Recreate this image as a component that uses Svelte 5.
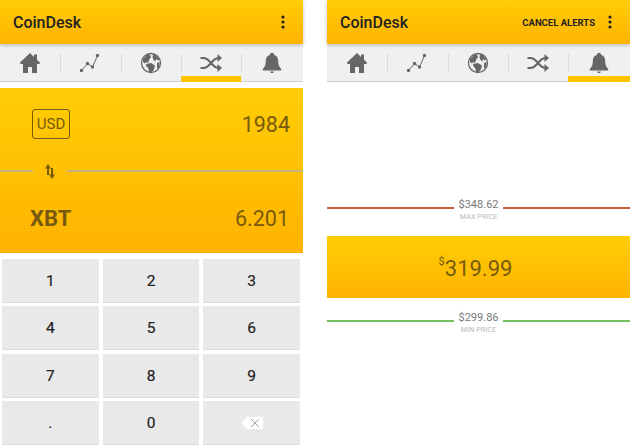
<script lang="ts">
  const tabs = ['home', 'chart', 'globe', 'shuffle', 'bell'];
  const keys = ['1', '2', '3', '4', '5', '6', '7', '8', '9', '.', '0', 'back'];
</script>

{#snippet header(action = '')}
  <header class="appbar">
    <span class="brand">CoinDesk</span>
    {#if action}<span class="action">{action}</span>{/if}
    <svg class="dots" width="4" height="14" viewBox="0 0 4 14" fill="#222">
      <circle cx="2" cy="2" r="1.6" /><circle cx="2" cy="7" r="1.6" /><circle cx="2" cy="12" r="1.6" />
    </svg>
  </header>
{/snippet}

{#snippet tabIcon(name)}
  {#if name === 'home'}
    <svg width="22" height="22" viewBox="0 0 22 22" fill="#666">
      <path d="M11 1 .8 10.8l1 1.2H4v9h5v-6h4v6h5v-9h2.200l1-1.200-3.200-3V2.500h-3v2.400z" />
    </svg>
  {:else if name === 'chart'}
    <svg width="22" height="22" viewBox="0 0 22 22" fill="#666">
      <path d="M2.5 18.5 8.5 11.500l5 3.500 5-11.500" fill="none" stroke="#666" stroke-width="1" />
      <circle cx="2.5" cy="18.5" r="1.7" /><circle cx="8.5" cy="11.5" r="1.7" />
      <circle cx="13.5" cy="15" r="1.7" /><circle cx="18.5" cy="3.5" r="1.7" />
    </svg>
  {:else if name === 'globe'}
    <svg width="22" height="22" viewBox="0 0 22 22">
      <circle cx="11" cy="11" r="9.5" fill="#eee" stroke="#666" stroke-width="1.3" />
      <path d="M3 7 7 3l3-.5 1 2.500-2 3-1 3-2-1-1 1.500-2-1.500zM13 2.500l3 1 3.500 4-1.500 1-2-1.500-.5 2.500-2-1.500-1-3zM6 12l5-1 4 2.500-1 4-3 3.500-2-.5-.5-4-2-2zM17 11l2.500-1-.5 5-2 1.500z" fill="#666" />
    </svg>
  {:else if name === 'shuffle'}
    <svg width="24" height="22" viewBox="0 0 24 22" fill="#666">
      <path d="M1.5 6h3c4 0 5.500 3 7.500 5s3.500 5 7.500 5h.5M1.500 16h3c4 0 5.500-3 7.500-5s3.500-5 7.500-5h.5" fill="none" stroke="#666" stroke-width="2.2" />
      <path d="M18.5 2l4.500 4-4.500 4zM18.500 12l4.500 4-4.500 4z" />
    </svg>
  {:else}
    <svg width="20" height="22" viewBox="0 0 20 22" fill="#666">
      <path d="M10 .8c1.200 0 2 .8 2 2 3 .8 4.200 3.400 4.200 6.200 0 4 1 6 3 8v1.500H.8V17c2-2 3-4 3-8 0-2.800 1.200-5.400 4.200-6.200 0-1.200.8-2 2-2z" />
      <path d="M8.2 19.5h3.600a1.800 1.800 0 0 1-3.600 0z" />
    </svg>
  {/if}
{/snippet}

{#snippet tabbar(active)}
  <nav class="tabs">
    {#each tabs as tab}
      <div class="tab" class:active={tab === active}>
        {@render tabIcon(tab)}
      </div>
    {/each}
  </nav>
{/snippet}

{#snippet limit(price, label, kind)}
  <div class="limit">
    <span class="rule {kind}"></span>
    <div class="limit-text">
      <span class="limit-price">{price}</span>
      <span class="limit-label">{label}</span>
    </div>
    <span class="rule {kind}"></span>
  </div>
{/snippet}

<main class="page">
  <section class="screen">
    {@render header()}
    {@render tabbar('shuffle')}
    <div class="converter">
      <div class="conv-row top">
        <span class="usd">USD</span>
        <span class="amount">1984</span>
      </div>
      <div class="swap">
        <span class="swap-line short"></span>
        <svg width="10" height="15" viewBox="0 0 10 15" fill="#785a0e">
          <path d="M3 0 0 4.500h2V11h2V4.500h2z" />
          <path d="M7 15l3-4.500H8V4H6v6.500H4z" />
        </svg>
        <span class="swap-line"></span>
      </div>
      <div class="conv-row bottom">
        <span class="xbt">XBT</span>
        <span class="amount">6.201</span>
      </div>
    </div>
    <div class="keypad">
      {#each keys as key}
        <button class="key">
          {#if key === 'back'}
            <svg width="24" height="14" viewBox="0 0 24 14">
              <path d="M7 1h16v12H7L1 7z" fill="#fff" />
              <path d="M11 3l8 8M19 3l-8 8" stroke="#888" stroke-width="0.8" fill="none" />
            </svg>
          {:else}
            {key}
          {/if}
        </button>
      {/each}
    </div>
  </section>

  <section class="screen">
    {@render header('CANCEL ALERTS')}
    {@render tabbar('bell')}
    <div class="alerts">
      {@render limit('$348.62', 'MAX PRICE', 'max')}
      <div class="current"><div class="current-value"><sup>$</sup>319.99</div></div>
      {@render limit('$299.86', 'MIN PRICE', 'min')}
    </div>
  </section>
</main>

<style>
  :global(body) {
    margin: 0;
    background: #fff;
  }

  .page {
    display: flex;
    gap: 24px;
    width: 630px;
    height: 446px;
    overflow: hidden;
    font-family: Roboto, "Liberation Sans", sans-serif;
  }

  .screen {
    width: 303px;
    flex: none;
    display: flex;
    flex-direction: column;
  }

  .appbar {
    position: relative;
    z-index: 1;
    height: 44px;
    display: flex;
    align-items: center;
    padding: 0 18px 0 13px;
    box-sizing: border-box;
    background: linear-gradient(#ffcd05, #ffb300);
    box-shadow: 0 1px 4px rgba(0, 0, 0, 0.25);
    color: #222;
  }

  .brand {
    font-size: 16px;
    font-weight: 500;
    margin-right: auto;
  }

  .action {
    font-size: 9.5px;
    font-weight: 700;
    margin-right: 13px;
  }

  .tabs {
    height: 38px;
    display: grid;
    grid-template-columns: repeat(4, 60.3px) 1fr;
    background: #f0f0f0;
    border-bottom: 1px solid #cfcfcf;
    box-sizing: border-box;
  }

  .tab {
    position: relative;
    display: flex;
    justify-content: center;
    padding-top: 8px;
    box-sizing: border-box;
  }

  .tab + .tab::before {
    content: '';
    position: absolute;
    left: 0;
    top: 10px;
    height: 18px;
    width: 1px;
    background: #dadada;
  }

  .tab.active::after {
    content: '';
    position: absolute;
    left: 0;
    right: 0;
    bottom: -1px;
    height: 6px;
    background: #ffc400;
  }

  .converter {
    margin-top: 6px;
    height: 165px;
    display: flex;
    flex-direction: column;
    background: linear-gradient(#ffcd05, #ffb300);
    color: #785a0e;
  }

  .conv-row {
    display: flex;
    align-items: center;
    justify-content: space-between;
    padding: 0 13px 0 30px;
  }

  .conv-row.top {
    height: 72px;
  }

  .conv-row.bottom {
    flex: 1;
    padding-right: 14px;
  }

  .usd {
    box-sizing: border-box;
    width: 38px;
    height: 30px;
    margin-left: 2px;
    border: 1px solid #785a0e;
    border-radius: 3px;
    display: flex;
    align-items: center;
    justify-content: center;
    font-size: 15px;
  }

  .amount {
    font-size: 21.5px;
    padding-top: 1px;
  }

  .xbt {
    font-size: 22px;
    font-weight: 700;
    padding-top: 2px;
  }

  .swap {
    height: 22px;
    display: flex;
    align-items: center;
    gap: 13px 12px;
  }

  .swap-line {
    flex: 1;
    height: 2px;
    background: #c3b37c;
  }

  .swap-line.short {
    flex: none;
    width: 33px;
  }

  .keypad {
    margin-top: 6px;
    padding: 0 3px 0 2px;
    display: grid;
    grid-template-columns: repeat(3, 1fr);
    grid-auto-rows: 44px;
    gap: 3.3px 4px;
  }

  .key {
    border: 0;
    border-bottom: 1px solid #dcdcdc;
    padding: 1px 0 0;
    background: #e9e9ea;
    color: #222;
    font-family: inherit;
    font-size: 15.5px;
    font-weight: 400;
    -webkit-text-stroke: 0.2px #222;
    display: flex;
    align-items: center;
    justify-content: center;
  }

  .alerts {
    display: flex;
    flex-direction: column;
    padding-top: 115px;
  }

  .limit {
    display: flex;
    align-items: flex-start;
    gap: 5px;
  }

  .rule {
    flex: 1;
    height: 2px;
    margin-top: 10px;
  }

  .rule.max {
    background: #c9633c;
  }

  .rule.min {
    background: #74bf5f;
  }

  .limit-text {
    width: 39px;
    display: flex;
    flex-direction: column;
    align-items: center;
  }

  .limit-price {
    font-size: 11px;
    line-height: 15px;
    color: #777;
  }

  .limit-label {
    font-size: 7.3px;
    line-height: 9px;
    white-space: nowrap;
    color: #bbb;
  }

  .current {
    height: 62px;
    margin: 15px 0 12px;
    display: flex;
    align-items: center;
    justify-content: center;
    background: linear-gradient(#ffcd05, #ffb300);
    color: #785a0e;
    font-size: 22px;
  }

  .current-value {
    display: flex;
    align-items: center;
    margin-right: 6px;
    padding-top: 2px;
  }

  .current sup {
    font-size: 11px;
    line-height: 1;
    margin-top: -13px;
  }
</style>
